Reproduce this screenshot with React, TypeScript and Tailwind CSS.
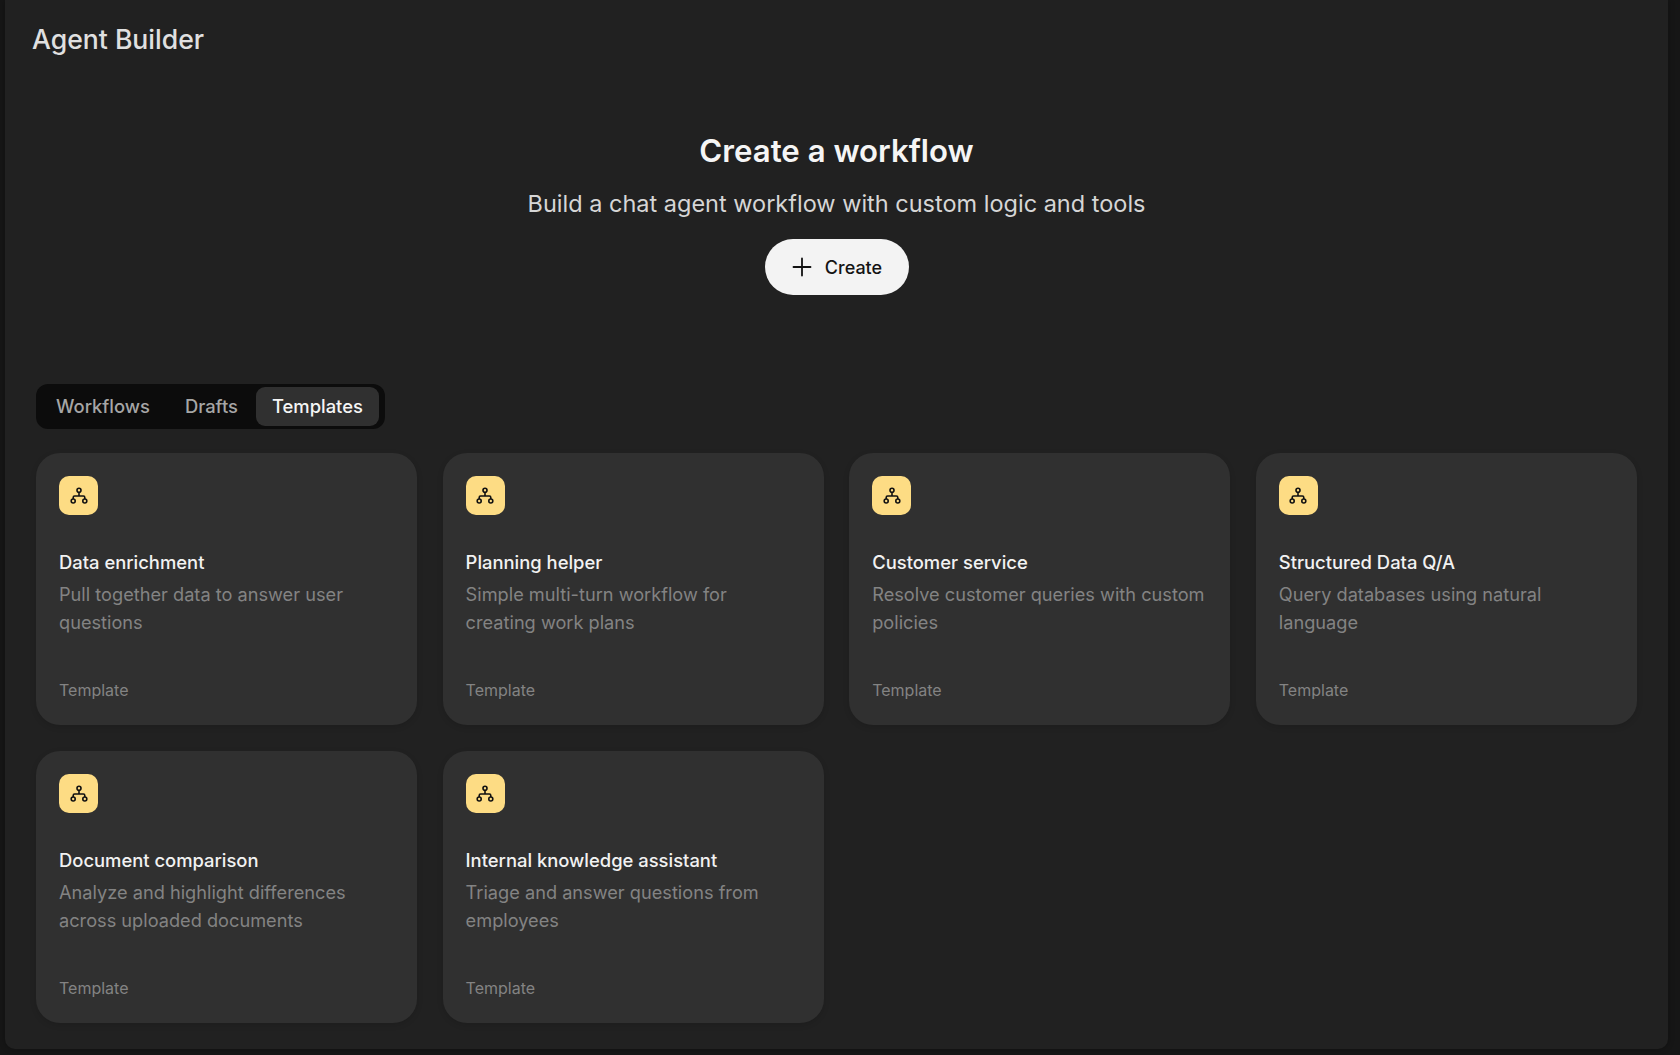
const templates = [
  { title: "Data enrichment", desc: "Pull together data to answer user questions" },
  { title: "Planning helper", desc: "Simple multi-turn workflow for creating work plans" },
  { title: "Customer service", desc: "Resolve customer queries with custom policies" },
  { title: "Structured Data Q/A", desc: "Query databases using natural language" },
  { title: "Document comparison", desc: "Analyze and highlight differences across uploaded documents" },
  { title: "Internal knowledge assistant", desc: "Triage and answer questions from employees" },
];

function FlowIcon() {
  return (
    <svg width="20" height="20" viewBox="0 0 20 20" fill="none" stroke="#111" strokeWidth="1.6">
      <circle cx="10" cy="4.2" r="2" />
      <circle cx="4.2" cy="15" r="2" />
      <circle cx="15.8" cy="15" r="2" />
      <path d="M10 6.2V10M4.2 13V11.4a1.4 1.4 0 0 1 1.4-1.4h8.8a1.4 1.4 0 0 1 1.4 1.4V13" />
    </svg>
  );
}

function PlusIcon() {
  return (
    <svg width="22" height="22" viewBox="0 0 22 22" fill="none" stroke="#111" strokeWidth="1.8" strokeLinecap="round">
      <path d="M11 2.5v17M2.5 11h17" />
    </svg>
  );
}

export default function App() {
  return (
    <div className="h-[1055px] w-[1680px] overflow-hidden bg-[#161616] font-['Inter',sans-serif]">
      <div className="ml-[5px] flex h-[1049px] w-[1663px] flex-col rounded-b-[10px] bg-[#212121] shadow-[0_0_6px_rgba(0,0,0,0.3)]">
        <h2 className="pl-[27px] pt-[21px] text-[26.6px] leading-[36px] font-medium text-[#e0e0e0]">Agent Builder</h2>

        {/* Hero */}
        <div className="mt-[72px] flex flex-col items-center">
          <h1 className="text-[31.2px] leading-[44px] font-semibold text-[#f5f5f5]">Create a workflow</h1>
          <p className="mt-[14px] text-[23.5px] leading-[34px] text-[#d6d6d6]">
            Build a chat agent workflow with custom logic and tools
          </p>
          <button className="mt-[18px] flex h-[56px] w-[144px] items-center justify-center gap-[12px] rounded-full bg-[#f3f3f3] text-[18px] font-medium text-[#141414]">
            <PlusIcon />
            Create
          </button>
        </div>

        {/* Tabs */}
        <div className="mt-[89px] ml-[31px] flex h-[45px] w-[349px] items-center rounded-[12px] bg-[#0c0c0c] p-[3px] text-[18.4px] font-medium">
          <span className="px-[17px] text-[#a6a6a6]">Workflows</span>
          <span className="px-[18px] text-[#a6a6a6]">Drafts</span>
          <span className="flex h-full items-center rounded-[9px] bg-[#303030] px-[16px] text-[#f5f5f5]">Templates</span>
        </div>

        {/* Cards */}
        <div className="mt-[24px] grid grid-cols-[repeat(4,381px)] gap-x-[25.6px] gap-y-[26px] pl-[31px]">
          {templates.map((t) => (
            <div
              key={t.title}
              className="flex h-[272px] flex-col rounded-[24px] bg-[#303030] px-[23px] pt-[23px] pb-[23px] shadow-[0_2px_6px_rgba(0,0,0,0.12)]"
            >
              <div className="flex h-[39px] w-[39px] items-center justify-center rounded-[10px] bg-[#fddc84]">
                <FlowIcon />
              </div>
              <div className="mt-[33px] text-[18.4px] leading-[28px] font-medium text-[#f2f2f2]">{t.title}</div>
              <p className="mt-[5px] text-[18.2px] leading-[27.5px] text-[#838383]">{t.desc}</p>
              <div className="mt-auto text-[16px] leading-[24px] text-[#838383]">Template</div>
            </div>
          ))}
        </div>
      </div>
    </div>
  );
}
